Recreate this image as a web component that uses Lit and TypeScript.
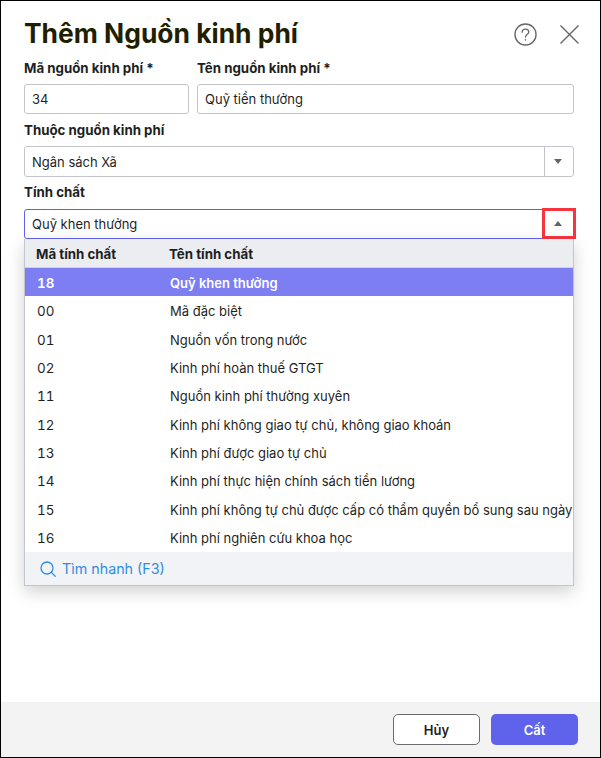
import { LitElement, html, css } from "lit";
import { customElement } from "lit/decorators.js";

const rows: [string, string][] = [
  ["18", "Quỹ khen thưởng"],
  ["00", "Mã đặc biệt"],
  ["01", "Nguồn vốn trong nước"],
  ["02", "Kinh phí hoàn thuế GTGT"],
  ["11", "Nguồn kinh phí thường xuyên"],
  ["12", "Kinh phí không giao tự chủ, không giao khoán"],
  ["13", "Kinh phí được giao tự chủ"],
  ["14", "Kinh phí thực hiện chính sách tiền lương"],
  ["15", "Kinh phí không tự chủ được cấp có thẩm quyền bổ sung sau ngày"],
  ["16", "Kinh phí nghiên cứu khoa học"],
];

@customElement("app-root")
export class AppRoot extends LitElement {
  static styles = css`
    :host {
      display: block;
      width: 601px;
      height: 758px;
      font-family: Inter, "Noto Sans", sans-serif;
      color: #1f1f1f;
      font-size: 13px;
      background: #fff;
    }
    * { box-sizing: border-box; }
    .dialog {
      width: 601px;
      height: 758px;
      border: 1px solid #000;
      background: #fff;
      display: flex;
      flex-direction: column;
      position: relative;
    }
    .head {
      display: flex;
      align-items: center;
      justify-content: space-between;
      height: 56px;
      padding: 8px 21px 0 23px;
    }
    h1 {
      margin: 0;
      font-size: 26.4px;
      line-height: 32px;
      font-weight: 700;
      color: #1f1f00;
    }
    .tools { display: flex; align-items: center; gap: 23px; margin-top: 3px; }
    .tools svg { display: block; }
    .body {
      flex: 1;
      padding: 0 26px 0 23px;
      display: flex;
      flex-direction: column;
    }
    .row { display: grid; grid-template-columns: 165px 377px; column-gap: 8px; margin-bottom: 5px; }
    label {
      display: block;
      font-size: 13.3px;
      font-weight: 700;
      line-height: 22px;
      height: 27px;
      color: #1f1f1f;
    }
    .field { margin-bottom: 5px; }
    .field.last { margin-bottom: 0; }
    .field.last label { line-height: 20px; }
    .box {
      height: 30px;
      border: 1px solid #c4c4cf;
      border-radius: 3px;
      padding: 0 7px;
      display: flex;
      align-items: center;
      font-size: 13px;
      background: #fff;
      color: #1f1f1f;
    }
    .sel { padding-right: 0; width: 550px; justify-content: space-between; }
    .sel.tall { height: 31px; }
    .arrow {
      width: 29px;
      height: 100%;
      border-left: 1px solid #c4c4cf;
      display: flex;
      align-items: center;
      justify-content: center;
      flex: none;
      padding-right: 2px;
    }
    .open { border-color: #5f63ec; position: relative; }
    .redbox {
      position: absolute;
      right: -3px;
      top: -2px;
      width: 34px;
      height: 31px;
      border: 3px solid #f6353f;
      display: flex;
      align-items: center;
      justify-content: center;
      padding-right: 2px;
    }
    .tri-d { width: 0; height: 0; border: 4.5px solid transparent; border-top: 5px solid #666; border-bottom: 0; }
    .tri-u { width: 0; height: 0; border: 4.5px solid transparent; border-bottom: 5px solid #666; border-top: 0; }
    .drop {
      position: absolute;
      left: 23px;
      top: 238px;
      width: 550px;
      height: 347px;
      background: #fff;
      border: 1px solid #c4c4cf;
      border-top: 0;
      box-shadow: 0 6px 16px rgba(0, 0, 0, 0.18);
      display: flex;
      flex-direction: column;
      overflow: hidden;
    }
    .thead, .tr {
      display: grid;
      grid-template-columns: 133px 1fr;
      align-items: center;
      white-space: nowrap;
      overflow: hidden;
    }
    .thead {
      height: 29px;
      padding-top: 1px;
      background: #ecedf1;
      border-bottom: 1px solid #d2d2d8;
      font-weight: 700;
      font-size: 13.3px;
      padding-left: 11px;
    }
    .tr { height: 28.35px; padding-top: 1.5px; padding-left: 12px; }
    .tr.sel-row { background: #7c7ef2; color: #fff; font-weight: 600; }
    .code { font-variant-numeric: tabular-nums; font-size: 13.4px; }
    .tbody { flex: 1; }
    .search {
      height: 33px;
      background: #f2f3f7;
      display: flex;
      align-items: center;
      gap: 6px;
      padding-left: 15px;
      color: #2f8ee0;
      font-size: 14.3px;
    }
    .foot {
      height: 55px;
      background: #f3f3f3;
      display: flex;
      justify-content: flex-end;
      align-items: center;
      gap: 11px;
      padding: 0 22px 0 0;
    }
    button {
      width: 87px;
      height: 31px;
      border-radius: 5px;
      font: 600 13px Inter, sans-serif;
    }
    .cancel { background: #fff; border: 1px solid #6b6b6b; color: #1f1f1f; }
    .save { background: #5f63ec; border: 0; color: #fff; }
  `;

  render() {
    return html`
      <div class="dialog">
        <div class="head">
          <h1>Thêm Nguồn kinh phí</h1>
          <div class="tools">
            <svg width="23" height="23" viewBox="0 0 24 24" fill="none" stroke="#666" stroke-width="1.4">
              <circle cx="12" cy="12" r="11"></circle>
              <path d="M8.6 9.6c0-2 1.5-3.2 3.4-3.2s3.4 1.2 3.4 3c0 2.6-3.4 2.6-3.4 5.2" stroke-linecap="round"></path>
              <circle cx="12" cy="17.6" r="0.5" fill="#666" stroke-width="0.8"></circle>
            </svg>
            <svg width="19" height="19" viewBox="0 0 19 19" fill="none" stroke="#666" stroke-width="1.4">
              <path d="M0.5 0.5L18.5 18.5M18.5 0.5L0.5 18.5"></path>
            </svg>
          </div>
        </div>
        <div class="body">
          <div class="row">
            <div><label>Mã nguồn kinh phí *</label><div class="box">34</div></div>
            <div><label>Tên nguồn kinh phí *</label><div class="box">Quỹ tiền thưởng</div></div>
          </div>
          <div class="field">
            <label>Thuộc nguồn kinh phí</label>
            <div class="box sel tall">Ngân sách Xã<span class="arrow"><span class="tri-d"></span></span></div>
          </div>
          <div class="field last">
            <label>Tính chất</label>
            <div class="box sel open">Quỹ khen thưởng<span class="redbox"><span class="tri-u"></span></span></div>
          </div>
        </div>
        <div class="foot">
          <button class="cancel">Hủy</button>
          <button class="save">Cất</button>
        </div>
        <div class="drop">
          <div class="thead"><span>Mã tính chất</span><span>Tên tính chất</span></div>
          <div class="tbody">
            ${rows.map(
              (r, i) => html`<div class="tr ${i === 0 ? "sel-row" : ""}"><span class="code">${r[0]}</span><span>${r[1]}</span></div>`
            )}
          </div>
          <div class="search">
            <svg width="16" height="16" viewBox="0 0 16 16" fill="none" stroke="#2f8ee0" stroke-width="1.3">
              <circle cx="7" cy="7" r="6"></circle>
              <path d="M11.4 11.4L15.2 15.2" stroke-linecap="round"></path>
            </svg>
            <span>Tìm nhanh (F3)</span>
          </div>
        </div>
      </div>
    `;
  }
}
